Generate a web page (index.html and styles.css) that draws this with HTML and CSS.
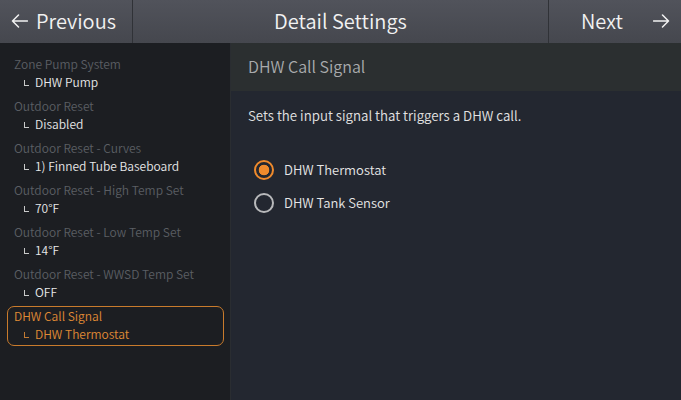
FILE: index.html
```html
<!DOCTYPE html>
<html>
<head>
<meta charset="utf-8">
<link rel="stylesheet" href="styles.css">
</head>
<body>
<div class="app">
  <header class="topbar">
    <div class="nav prev">
      <svg class="arrow" width="17" height="14" viewBox="0 0 17 14"><path d="M16.5 7H1.5M7.5 1L1.5 7L7.5 13" fill="none" stroke="#f2f2f2" stroke-width="1.5" stroke-linecap="round" stroke-linejoin="round"/></svg>
      <span>Previous</span>
    </div>
    <div class="title">Detail Settings</div>
    <div class="nav next">
      <span>Next</span>
      <svg class="arrow" width="17" height="14" viewBox="0 0 17 14"><path d="M0.5 7H15.5M9.5 1L15.5 7L9.5 13" fill="none" stroke="#f2f2f2" stroke-width="1.5" stroke-linecap="round" stroke-linejoin="round"/></svg>
    </div>
  </header>
  <div class="content">
    <aside class="sidebar">
      <div class="item"><div class="label">Zone Pump System</div><div class="value"><span class="elbow"></span>DHW Pump</div></div>
      <div class="item"><div class="label">Outdoor Reset</div><div class="value"><span class="elbow"></span>Disabled</div></div>
      <div class="item"><div class="label">Outdoor Reset - Curves</div><div class="value"><span class="elbow"></span>1) Finned Tube Baseboard</div></div>
      <div class="item"><div class="label">Outdoor Reset - High Temp Set</div><div class="value"><span class="elbow"></span>70°F</div></div>
      <div class="item"><div class="label">Outdoor Reset - Low Temp Set</div><div class="value"><span class="elbow"></span>14°F</div></div>
      <div class="item"><div class="label">Outdoor Reset - WWSD Temp Set</div><div class="value"><span class="elbow"></span>OFF</div></div>
      <div class="item active"><div class="label">DHW Call Signal</div><div class="value"><span class="elbow"></span>DHW Thermostat</div></div>
    </aside>
    <main class="main">
      <div class="panel-head">DHW Call Signal</div>
      <div class="panel-body">
        <p class="desc">Sets the input signal that triggers a DHW call.</p>
        <div class="options">
          <div class="option checked"><span class="radio"></span><span>DHW Thermostat</span></div>
          <div class="option"><span class="radio"></span><span>DHW Tank Sensor</span></div>
        </div>
      </div>
    </main>
  </div>
</div>
</body>
</html>
```
FILE: styles.css
```css
* { box-sizing: border-box; }
html, body { margin: 0; padding: 0; }
body {
  width: 681px;
  height: 400px;
  overflow: hidden;
  background: #1c1e22;
  font-family: "Noto Sans CJK JP", "Noto Sans", sans-serif;
  font-weight: 350;
  color: #e6e6e6;
}
.app { display: flex; flex-direction: column; height: 400px; }
.topbar {
  height: 43px;
  display: flex;
  background: linear-gradient(#51535b, #45474e);
  color: #f2f2f2;
  flex: none;
}
.nav {
  width: 133px;
  display: flex;
  align-items: center;
  font-size: 20px;
  padding-bottom: 2px;
}
.prev {
  padding-left: 11px;
  gap: 8px;
  border-right: 1px solid #303237;
}
.next {
  width: 133px;
  padding: 0 11px 2px 32px;
  justify-content: space-between;
  border-left: 1px solid #303237;
}
.arrow { display: block; margin-top: 1px; }
.title {
  flex: 1;
  display: flex;
  align-items: center;
  justify-content: center;
  font-size: 20px;
  padding-bottom: 2px;
}
.content { flex: 1; display: flex; min-height: 0; }
.sidebar {
  width: 231px;
  flex: none;
  background: #1c1e22;
  border-right: 1px solid #2a2d31;
  padding: 11px 6px 0 7px;
  display: flex;
  flex-direction: column;
  gap: 2px;
}
.item {
  height: 40px;
  border: 1px solid transparent;
  border-radius: 7px;
  padding: 0 6px;
  font-size: 12px;
}
.label { height: 18px; line-height: 18px; color: #5b5e64; white-space: nowrap; }
.value { height: 18px; line-height: 18px; color: #e8e8e8; display: flex; align-items: center; }
.elbow {
  width: 5px;
  height: 6px;
  border-left: 1px solid currentColor;
  border-bottom: 1px solid currentColor;
  margin: 2px 6px 0 10px;
  opacity: 0.85;
}
.item.active { border-color: #c97b2c; }
.item.active .label, .item.active .value { color: #e08b35; }
.main { flex: 1; background: #232730; display: flex; flex-direction: column; }
.panel-head {
  height: 48px;
  background: #2b2f30;
  display: flex;
  align-items: center;
  padding-left: 17px;
  padding-bottom: 2px;
  font-size: 16px;
  color: #a9abad;
}
.panel-body { padding: 15px 17px 0; }
.desc { margin: 0; font-size: 13.3px; line-height: 20px; color: #e2e2e2; }
.options { margin-top: 27px; display: flex; flex-direction: column; }
.option {
  height: 33px;
  display: flex;
  align-items: center;
  gap: 10px;
  padding-left: 6px;
  font-size: 13px;
  color: #e6e6e6;
}
.radio {
  width: 20px;
  height: 20px;
  border-radius: 50%;
  border: 2px solid #b8b9bb;
  flex: none;
}
.option.checked .radio {
  border-color: #ef8a2c;
  background: radial-gradient(circle, #ef8a2c 0 5px, transparent 5.6px);
}
```
